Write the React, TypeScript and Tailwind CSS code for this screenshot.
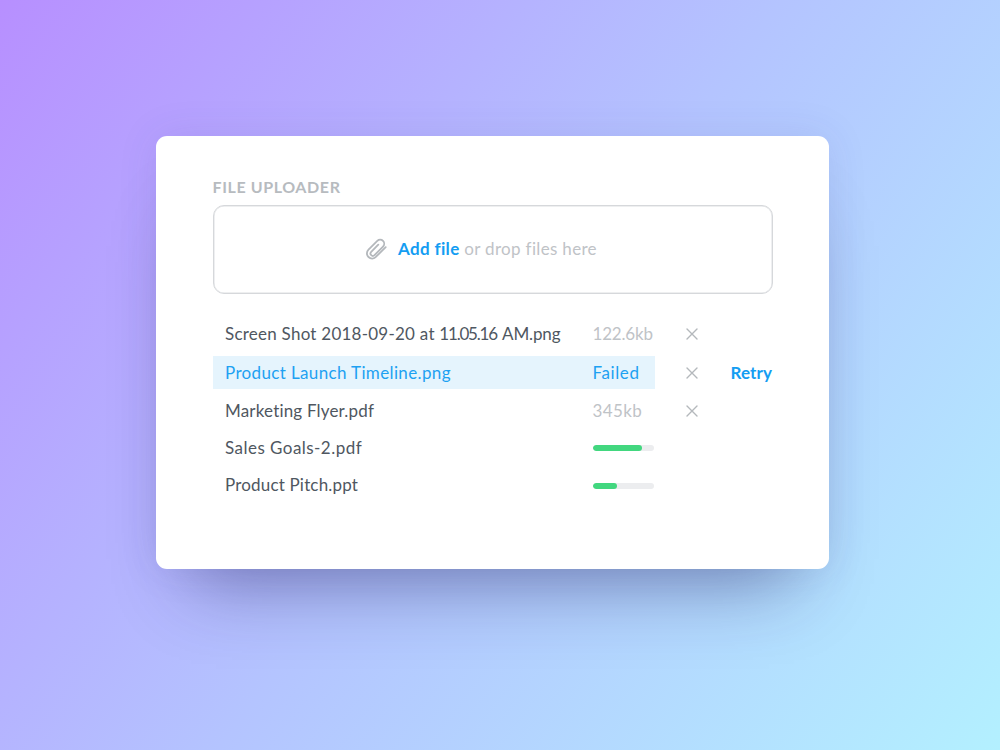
import React from "react";

type FileRow = {
  name: { text: string; tracking: string }[];
  rowClass: string;
  status?: string;
  statusClass?: string;
  progress?: number;
  barClass?: string;
  failed?: boolean;
};

const files: FileRow[] = [
  {
    name: [
      { text: "Screen Shot 2018-09-20 at ", tracking: "tracking-[0.24px]" },
      { text: "11.05.16", tracking: "tracking-[-1.2px]" },
      { text: " ", tracking: "tracking-[0.8px]" },
      { text: "AM.png", tracking: "tracking-[-0.15px]" },
    ],
    rowClass: "h-[44px]",
    status: "122.6kb",
    statusClass: "text-[#bfc3c7] tracking-[-0.2px]",
  },
  {
    name: [{ text: "Product Launch Timeline.png", tracking: "tracking-[0.36px]" }],
    rowClass: "h-[33px]",
    status: "Failed",
    statusClass: "tracking-[0.6px]",
    failed: true,
  },
  {
    name: [{ text: "Marketing Flyer.pdf", tracking: "tracking-[0.18px]" }],
    rowClass: "h-[43px]",
    status: "345kb",
    statusClass: "text-[#bfc3c7] tracking-[0.4px]",
  },
  { name: [{ text: "Sales Goals-2.pdf", tracking: "tracking-[0.46px]" }], rowClass: "h-[31px]", progress: 49, barClass: "mt-0" },
  { name: [{ text: "Product Pitch.ppt", tracking: "tracking-[0.18px]" }], rowClass: "h-[43px]", progress: 24, barClass: "mt-[3px]" },
];

function PaperclipIcon() {
  return (
    <svg width="24" height="24" viewBox="0 0 24 24" fill="none" stroke="#b4b8bc" strokeWidth="1.8" strokeLinecap="round" strokeLinejoin="round">
      <path d="M21.7 10.2 12.1 19.7a5.1 5.1 0 0 1-7.6.3 5.1 5.1 0 0 1 0-7.4l8.8-8.7a4 4 0 0 1 5.7 5.7l-8.5 8.5a2.3 2.3 0 0 1-3.3-3.3l7.1-7.1" />
    </svg>
  );
}

function CloseIcon() {
  return (
    <svg width="12" height="12" viewBox="0 0 12 12" fill="none" stroke="#b4b8bc" strokeWidth="1.4" strokeLinecap="round">
      <path d="M1 1l10 10M11 1L1 11" />
    </svg>
  );
}

export default function App() {
  return (
    <div className="h-[750px] w-[1000px] overflow-hidden bg-[linear-gradient(127deg,#b78fff_0%,#b4c4ff_50%,#b3f0ff_100%)] pl-[156px] pt-[136px] font-['Lato',sans-serif] [font-variant-ligatures:none]">
      <main className="h-[433px] w-[673px] rounded-[11px] bg-white px-[56.5px] pt-[41px] shadow-[0_50px_70px_-35px_rgba(30,30,90,0.42),0_0_40px_rgba(60,60,140,0.1)]">
        <h1 className="h-[28px] text-[16px] font-bold leading-[20px] tracking-[0.6px] text-[#b7bbbf]">FILE UPLOADER</h1>
        <div className="flex h-[89px] w-[560px] items-center rounded-[11px] border border-[#d6d8db] pb-[1px] pl-[150px] shadow-[inset_0_0_0_0.5px_#dddfe2]">
          <PaperclipIcon />
          <p className="-mt-[1px] ml-[10.5px] whitespace-nowrap text-[17px] tracking-[0.33px] text-[#bfc3c7]">
            <button className="font-bold tracking-[0.35px] text-[#149df2]">Add file</button> or drop files here
          </p>
        </div>
        <ul className="mt-[18px] w-[560px]">
          {files.map((f, i) => (
            <li key={i} className={`flex items-center text-[17px] ${f.rowClass}`}>
              <div className={`flex h-[33px] w-[442px] shrink-0 items-center pl-[12.5px] ${f.failed ? "bg-[#e5f4fd] text-[#1da1f2]" : "text-[#4f5761]"}`}>
                <span className="w-[367.5px] shrink-0 whitespace-pre">
                  {f.name.map((part) => (
                    <span key={part.text} className={part.tracking}>{part.text}</span>
                  ))}
                </span>
                {f.status && <span className={f.statusClass}>{f.status}</span>}
                {f.progress && (
                  <div className={`h-[6px] w-[61px] overflow-hidden rounded-full bg-[#ecedef] ${f.barClass}`}>
                    <div className="h-full rounded-full bg-[#42d77f]" style={{ width: f.progress }} />
                  </div>
                )}
              </div>
              {f.status && (
                <button className="ml-[31.5px]" aria-label="Remove file">
                  <CloseIcon />
                </button>
              )}
              {f.failed && <button className="ml-[32.5px] font-bold tracking-[0.1px] text-[#149df2]">Retry</button>}
            </li>
          ))}
        </ul>
      </main>
    </div>
  );
}
